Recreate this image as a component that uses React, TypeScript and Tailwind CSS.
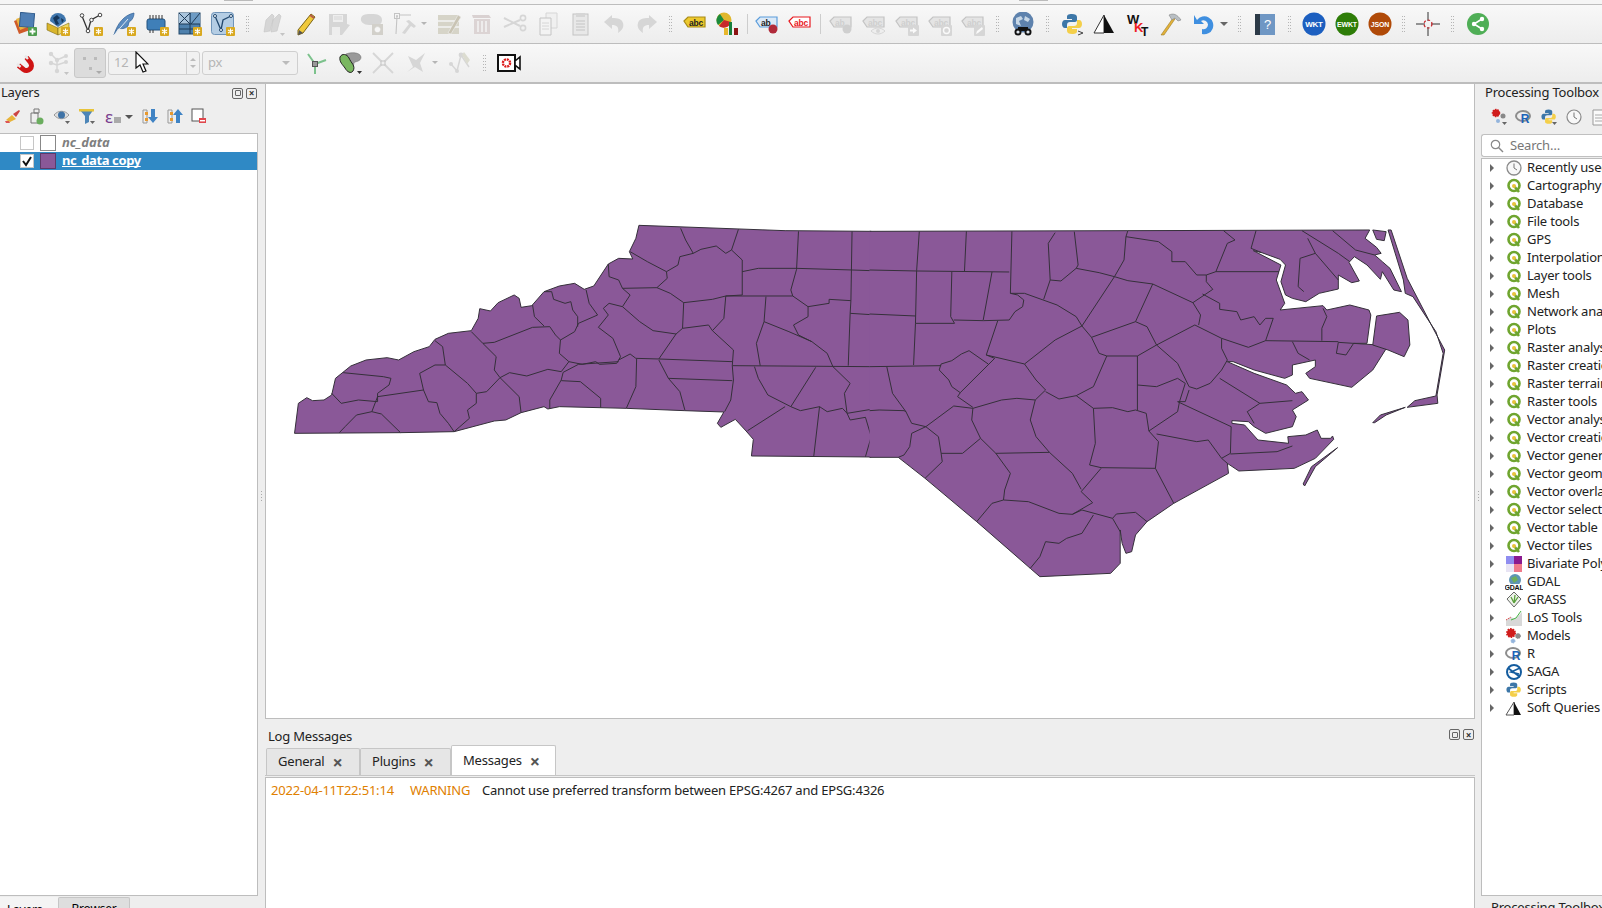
import React from "react";

const FONT = "font-['Noto_Sans','Open_Sans',sans-serif] tracking-[-0.2px]";

function S({ children, w = 24, h = 24 }: { children?: React.ReactNode; w?: number; h?: number }) {
  return (
    <svg width={w} height={h} viewBox={`0 0 ${w} ${h}`} className="block shrink-0">
      {children}
    </svg>
  );
}

// yellow "new layer" badge
const Star = ({ x = 14, y = 14 }: { x?: number; y?: number }) => (
  <g transform={`translate(${x} ${y})`}>
    <rect width="9" height="9" rx="1" fill="#d9a920" />
    <path d="M4.5 1.5v6M2 3l5 3M7 3L2 6" stroke="#fff" strokeWidth="1.1" />
  </g>
);

const Arrow = ({ x, y }: { x: number; y: number }) => <path d={`M${x} ${y}h5l-2.5 3z`} fill="#666" />;

const G = "#d6d6d6";
const GD = "#c4c4c4";

const Tag = ({ fill, stroke, color, label = "abc" }: { fill: string; stroke: string; color: string; label?: string }) => (
  <g>
    <path d="M1 9l4-4h17v10H5z" fill={fill} stroke={stroke} strokeWidth="1.2" />
    <text x="6" y="13.5" fontSize="8.5" fontWeight="700" fill={color} fontFamily="Liberation Sans">
      {label}
    </text>
  </g>
);

const Round = ({ fill, label, size = 8 }: { fill: string; label: string; size?: number }) => (
  <g>
    <circle cx="12" cy="12" r="11.5" fill={fill} />
    <text x="12" y="15" textAnchor="middle" fontSize={size} fontWeight="700" fill="#fff" fontFamily="Liberation Sans">
      {label}
    </text>
  </g>
);

const Python = () => (
  <g>
    <path d="M12 2c-4 0-5 1-5 3v2h5v1H5c-2 0-3 2-3 4s1 4 3 4h2v-3c0-2 1-3 3-3h5c1 0 2-1 2-2V5c0-2-2-3-5-3z" fill="#3d77a8" />
    <path d="M12 22c4 0 5-1 5-3v-2h-5v-1h7c2 0 3-2 3-4s-1-4-3-4h-2v3c0 2-1 3-3 3H9c-1 0-2 1-2 2v3c0 2 2 3 5 3z" fill="#f4cf4a" />
  </g>
);

const icons: Record<string, React.ReactNode> = {
  dsm: (
    <S>
      <path d="M1 9l10-4 6 13-11 4z" fill="#cf5a2a" />
      <path d="M3 7l11-4 3 11-10 4z" fill="#e9b43f" />
      <rect x="7" y="1" width="14" height="14" fill="#4f7fb5" stroke="#2f5b8c" transform="rotate(5 14 8)" />
      <rect x="15" y="15" width="9" height="9" rx="1" fill="#4f9d4f" />
      <path d="M19.5 16.5v6M16.5 19.5h6" stroke="#fff" strokeWidth="1.8" />
    </S>
  ),
  gpkg: (
    <S>
      <path d="M1 11l11 5v7L1 18z" fill="#d9b52c" stroke="#7e6a15" strokeWidth=".6" />
      <path d="M12 16l11-5v7l-11 5z" fill="#f0d75c" stroke="#7e6a15" strokeWidth=".6" />
      <path d="M4 9a8 8 0 0 1 16 0l-8 6z" fill="#3f76ad" />
      <path d="M7 6l4-3 3 3-3 2 2 4-3 1zM15 6l3 2-2 3z" fill="#16375c" />
      <Star x={15} y={15} />
    </S>
  ),
  newv: (
    <S>
      <path d="M3 4l6 15 3-11 9-5" fill="none" stroke="#333" strokeWidth="1.3" />
      <circle cx="3" cy="3.5" r="1.8" fill="#fff" stroke="#444" />
      <circle cx="12.5" cy="8" r="1.8" fill="#fff" stroke="#444" />
      <circle cx="21" cy="3" r="1.8" fill="#fff" stroke="#444" />
      <circle cx="9" cy="19" r="1.8" fill="#fff" stroke="#444" />
      <Star x={15} y={15} />
    </S>
  ),
  feather: (
    <S>
      <path d="M2 23C5 12 12 3 22 1c0 5-3 8-5 9l-1 4c-3 3-7 3-10 2z" fill="#5b8cc0" stroke="#2f5f93" strokeWidth=".7" />
      <path d="M2 23L16 7" stroke="#dfe9f3" strokeWidth="1" />
      <Star x={15} y={15} />
    </S>
  ),
  chip: (
    <S>
      <rect x="2" y="7" width="18" height="11" rx="2" fill="#3f7fb8" stroke="#22527f" />
      <path d="M5 3v4M8 3v4M11 3v4M14 3v4M17 3v4M5 18v3M8 18v3" stroke="#333" />
      <Star x={15} y={15} />
    </S>
  ),
  grid: (
    <S>
      <rect x="1" y="1" width="21" height="21" fill="#4f81ad" stroke="#23486b" />
      <rect x="13" y="1" width="9" height="11" fill="#6d9bc4" />
      <rect x="1" y="1" width="11" height="11" fill="#a9c4dc" />
      <path d="M1 1l11 11M12 1L1 12M22 1L13 12M1 12h21M12 1v21M1 17h21" stroke="#1e3a56" strokeWidth="1" />
      <Star x={15} y={15} />
    </S>
  ),
  vlayer: (
    <S>
      <rect x="0.5" y="0.5" width="22" height="22" rx="3" fill="#b4cde4" stroke="#6e93b8" />
      <path d="M4 4l6 14 2-10 8-4" fill="none" stroke="#22486e" strokeWidth="1.3" />
      <circle cx="4" cy="4" r="1.5" fill="#fff" stroke="#22486e" />
      <circle cx="20" cy="4" r="1.5" fill="#fff" stroke="#22486e" />
      <circle cx="10" cy="18" r="1.5" fill="#fff" stroke="#22486e" />
      <Star x={15} y={15} />
    </S>
  ),
  gpen: (
    <S>
      <path d="M3 20l2-12 6-6 2 2-4 15zM10 20l2-12 6-6 2 2-4 15z" fill={G} stroke={GD} strokeWidth=".6" />
      <path d="M19 21h5l-2.5 3z" fill={GD} />
    </S>
  ),
  pencil: (
    <S>
      <path d="M4 18L17 2l4 3L9 21l-5 2z" fill="#f0c93b" stroke="#7c6516" />
      <path d="M5 18l4 3-5 2z" fill="#555" />
      <path d="M16 3l4 3" stroke="#b65c4a" strokeWidth="2" />
    </S>
  ),
  save: (
    <S>
      <path d="M2 2h18v10l3 1-8 10H2z" fill={G} />
      <rect x="6" y="3" width="10" height="7" fill="#eee" />
      <path d="M7 5h8M7 7h8" stroke={G} />
      <rect x="5" y="15" width="8" height="8" fill="#eee" />
    </S>
  ),
  blob: (
    <S>
      <path d="M1 6c1-4 6-4 11-4s10 1 10 6c0 4-3 5-5 5H9C4 13 0 10 1 6z" fill={G} />
      <rect x="12" y="12" width="11" height="11" fill="#d2d0ca" />
      <circle cx="17.5" cy="17.5" r="2.6" fill="#f6f6f6" stroke="#f6f6f6" strokeDasharray="1 1" />
    </S>
  ),
  node: (
    <S>
      <path d="M4 4l-1 18M6 3h12" stroke={GD} strokeWidth="1.1" />
      <rect x="1.5" y="1.5" width="5" height="5" fill="none" stroke={GD} />
      <circle cx="4" cy="4" r="1" fill={GD} />
      <path d="M9 21l7-9-3-3 3-1 7 6-2 2-3-2-6 8z" fill={G} />
    </S>
  ),
  table: (
    <S>
      <rect x="1" y="3" width="21" height="19" fill="#d6d4c8" />
      <path d="M1 9h21M1 15h21" stroke="#f4f4f4" strokeWidth="1.5" />
      <path d="M11 21L21 3l3 2-10 17z" fill="#c9c4b4" stroke="#f0f0f0" strokeWidth=".6" />
    </S>
  ),
  trash: (
    <S>
      <path d="M2 3h17l2 3H3z" fill="#d9d1d1" />
      <path d="M4 7h16v15H4z" fill="#dcd4d4" />
      <path d="M8 9v11M12 9v11M16 9v11" stroke="#f3f3f3" strokeWidth="1.5" />
    </S>
  ),
  cut: (
    <S>
      <path d="M1 6l16 8M1 15l16-7" stroke={G} strokeWidth="2" />
      <circle cx="20" cy="6" r="2.6" fill="none" stroke={G} strokeWidth="1.6" />
      <circle cx="20" cy="16" r="2.6" fill="none" stroke={G} strokeWidth="1.6" />
    </S>
  ),
  copy: (
    <S>
      <path d="M10 1h11v15H10z" fill="#f0f0f0" stroke={G} />
      <path d="M4 6h11v17H4z" fill="#f3f3f3" stroke={GD} />
      <path d="M6 11h7M6 14h7M6 17h7" stroke={G} />
    </S>
  ),
  paste: (
    <S>
      <rect x="4" y="2" width="15" height="21" fill="#e8e8e8" stroke={GD} />
      <rect x="7" y="1" width="9" height="4" fill={G} />
      <path d="M7 9h9M7 12h9M7 15h9M7 18h9" stroke={GD} />
    </S>
  ),
  undo: (
    <S>
      <path d="M10 3L2 10l8 7v-4c5 0 7 2 6 8 5-3 6-7 5-10-1-4-5-5-11-5z" fill={G} />
    </S>
  ),
  redo: (
    <S>
      <path d="M14 3l8 7-8 7v-4c-5 0-7 2-6 8-5-3-6-7-5-10 1-4 5-5 11-5z" fill={G} />
    </S>
  ),
  abcY: (
    <S>
      <Tag fill="#edc92e" stroke="#a98c16" color="#222" />
    </S>
  ),
  pie: (
    <S>
      <circle cx="8" cy="8" r="7.5" fill="#e0b72c" />
      <path d="M8 8L2 13a7.5 7.5 0 0 1 2-11z" fill="#1a8a3c" />
      <path d="M8 8l7 2a7.5 7.5 0 0 1-12 4z" fill="#c7282a" />
      <rect x="8" y="16" width="4" height="7" fill="#e8b72c" />
      <rect x="13" y="10" width="3" height="13" fill="#17803c" />
      <rect x="18" y="16" width="4" height="7" fill="#8c1414" />
    </S>
  ),
  abcB: (
    <S>
      <Tag fill="#dbe9f7" stroke="#5c9ddb" color="#222" label="ab" />
      <circle cx="18" cy="17" r="4.5" fill="#b02a3a" />
    </S>
  ),
  abcR: (
    <S>
      <Tag fill="#fff" stroke="#e8181e" color="#e8181e" />
    </S>
  ),
  g1: (
    <S>
      <Tag fill="#e4e4e4" stroke={GD} color="#cfcfcf" label="ab" />
      <circle cx="18" cy="17" r="4.5" fill="#cfcfcf" />
    </S>
  ),
  g2: (
    <S>
      <Tag fill="#e4e4e4" stroke={GD} color="#cfcfcf" />
      <path d="M9 19c4-4 10-4 14 0-4 4-10 4-14 0z" fill="#eee" stroke={G} />
      <circle cx="16" cy="19" r="2" fill={G} />
    </S>
  ),
  g3: (
    <S>
      <Tag fill="#e4e4e4" stroke={GD} color="#cfcfcf" />
      <rect x="13" y="13" width="11" height="11" rx="1" fill={G} />
      <path d="M15 17.5h3v-2l4 3-4 3v-2h-3z" fill="#fafafa" />
    </S>
  ),
  g4: (
    <S>
      <Tag fill="#e4e4e4" stroke={GD} color="#cfcfcf" />
      <rect x="13" y="13" width="11" height="11" rx="1" fill={G} />
      <circle cx="18.5" cy="18.5" r="3" fill="none" stroke="#fafafa" strokeWidth="1.4" />
    </S>
  ),
  g5: (
    <S>
      <Tag fill="#e4e4e4" stroke={GD} color="#cfcfcf" />
      <rect x="13" y="13" width="11" height="11" rx="1" fill={G} />
      <path d="M15 22l1-3 5-4 1 2-5 4z" fill="#fafafa" />
    </S>
  ),
  globe: (
    <S>
      <circle cx="12" cy="10" r="10.5" fill="#5e82ad" />
      <path d="M5 6l5-2 2 3-4 2 2 5-5-2zM14 4l5 3-2 3-4-2z" fill="#c7d7e6" />
      <circle cx="7" cy="20" r="3.5" fill="#111" />
      <circle cx="17" cy="20" r="3.5" fill="#111" />
      <rect x="7" y="15" width="10" height="4" fill="#111" />
      <circle cx="7" cy="20" r="1.6" fill="#dfe6ee" />
      <circle cx="17" cy="20" r="1.6" fill="#dfe6ee" />
    </S>
  ),
  py: (
    <S>
      <Python />
      <path d="M18 19l5 2-5 2" fill="none" stroke="#444" />
    </S>
  ),
  tri: (
    <S>
      <path d="M11 3L1 21h10z" fill="#fff" stroke="#333" />
      <path d="M11 3l10 18H11z" fill="#111" />
    </S>
  ),
  wkt: (
    <S>
      <text x="1" y="12" fontSize="13" fontWeight="700" fill="#111" fontFamily="Liberation Sans">W</text>
      <text x="8" y="20" fontSize="13" fontWeight="700" fill="#ee1c25" fontFamily="Liberation Sans">K</text>
      <text x="15" y="23.5" fontSize="12" fontWeight="700" fill="#111" fontFamily="Liberation Sans">T</text>
    </S>
  ),
  hammer: (
    <S>
      <path d="M2 23L14 6l2 1L5 23z" fill="#e3b23a" stroke="#8d6c17" strokeWidth=".5" />
      <path d="M10 3c4-2 8-1 12 5l-3 1-3-3-3 2z" fill="#b9bfc4" stroke="#777" strokeWidth=".5" />
    </S>
  ),
  rot: (
    <S>
      <path d="M5 8a9 9 0 1 1 5 14v-5a4.5 4.5 0 1 0-1-8l3 3H2V3l3 5z" fill="#3f8fe0" />
    </S>
  ),
  help: (
    <S>
      <rect x="2" y="2" width="20" height="21" fill="#6f97c4" />
      <rect x="2" y="2" width="5" height="21" fill="#2c3a47" />
      <text x="14.5" y="17" textAnchor="middle" fontSize="13" fill="#fff" fontFamily="Liberation Sans">?</text>
    </S>
  ),
  rwkt: <S><Round fill="#1c5fc0" label="WKT" /></S>,
  rewkt: <S><Round fill="#2e7d08" label="EWKT" size={7} /></S>,
  rjson: <S><Round fill="#b04a08" label="JSON" size={7} /></S>,
  cross: (
    <S>
      <path d="M0 12h9M15 12h9M12 0v9M12 15v9" stroke="#333" />
      <circle cx="12" cy="12" r="4" fill="none" stroke="#c8242a" strokeWidth="1.2" strokeDasharray="2.5 2" />
    </S>
  ),
  share: (
    <S>
      <circle cx="12" cy="12" r="11" fill="#4fae56" />
      <path d="M16 7l-8 5 8 5" fill="none" stroke="#fff" strokeWidth="1.6" />
      <circle cx="16" cy="7" r="2.2" fill="#fff" />
      <circle cx="8" cy="12" r="2.2" fill="#fff" />
      <circle cx="16" cy="17" r="2.2" fill="#fff" />
    </S>
  ),
  magnet: (
    <S>
      <path d="M5.5 14.5l5 4a5 5 0 0 0 7-7l-4-5" fill="none" stroke="#cf1414" strokeWidth="5" />
      <path d="M4 13l3.6 3M12 4.6l3 3.4" stroke="#e9e9e9" strokeWidth="2.4" />
    </S>
  ),
  snapnet: (
    <S>
      <path d="M5 3l6 6v11M5 12l6 2M11 9l9-4M11 14l9-3" fill="none" stroke={G} strokeWidth="1.5" />
      <circle cx="5" cy="3" r="2.2" fill={G} /><circle cx="11" cy="9" r="2.2" fill={G} />
      <circle cx="5" cy="12" r="2.2" fill={G} /><circle cx="11" cy="20" r="2.2" fill={G} />
      <circle cx="20" cy="5" r="2" fill={G} /><circle cx="20" cy="11" r="2" fill={G} />
      <path d="M18 21h5l-2.5 3z" fill={GD} />
    </S>
  ),
  tr: (
    <S>
      <path d="M12 13L5 3M12 13l11-4M12 13v10" stroke="#7cc28c" strokeWidth="2" />
      <rect x="9.5" y="10.5" width="5" height="5" fill="#999" stroke="#555" />
    </S>
  ),
  topo: (
    <S>
      <path d="M8 3c5-2 14-2 15 3 0 5-6 4-7 6l-1 5-9-2z" fill="#9a9a9a" stroke="#666" strokeWidth=".5" />
      <path d="M2 6c2-4 7-3 9 1 2 5 7 8 4 13-2 3-6 1-8-3-2-3-6-6-5-11z" fill="#7ab760" stroke="#222" />
      <path d="M19 20h5l-2.5 3z" fill="#333" />
    </S>
  ),
  gx: (
    <S>
      <path d="M2 2l20 20M22 2L2 22" stroke={G} strokeWidth="1.8" />
      <rect x="10" y="10" width="4" height="4" fill="#eee" stroke={GD} />
    </S>
  ),
  gx2: (
    <S>
      <path d="M3 21l6-5-5-11 8 4 9-7-5 10 3 9-8-5z" fill={G} />
    </S>
  ),
  gn: (
    <S>
      <path d="M3 13l6 7 4-16 8 12" fill="none" stroke={G} strokeWidth="1.5" />
      <circle cx="3" cy="13" r="2" fill={G} /><circle cx="9" cy="20" r="2" fill={G} /><circle cx="13" cy="4" r="2.4" fill={G} />
      <path d="M16 1l6 8-3 4-5-9z" fill="#dcdcd0" />
    </S>
  ),
  video: (
    <S>
      <rect x="1" y="4" width="17" height="16" fill="#fff" stroke="#111" strokeWidth="2" />
      <path d="M18 10l5-4v12l-5-4z" fill="#fff" stroke="#111" strokeWidth="1.6" />
      <circle cx="9.5" cy="12" r="3.6" fill="none" stroke="#dd1b1b" strokeWidth="2.4" strokeDasharray="2 .8" />
    </S>
  ),
};

function Btn({ name, wide }: { name: string; wide?: boolean }) {
  return (
    <div className={`relative flex h-full shrink-0 items-center ${wide ? "w-[44px] pl-[5px]" : "w-[33px] justify-center"}`}>
      {icons[name]}
      {wide && <span className="absolute right-[5px] top-[17px] h-0 w-0 border-x-[3px] border-t-[3px] border-x-transparent border-t-[#b5b5b5]" />}
    </div>
  );
}

function Handle({ w = "w-[17px]" }: { w?: string }) {
  return (
    <div className={`flex h-full shrink-0 items-center justify-center ${w}`}>
      <div className="grid grid-cols-2 gap-x-[1px] gap-y-[2px]">
        {Array.from({ length: 12 }).map((_, i) => (
          <span key={i} className="h-[1px] w-[1px] bg-[#b5b5b5]" />
        ))}
      </div>
    </div>
  );
}

const Sep = ({ w = "w-[6px]" }: { w?: string }) => (
  <div className={`flex h-full shrink-0 items-center justify-center ${w}`}>
    <div className="h-[20px] w-[1px] bg-[#cdcdcd]" />
  </div>
);

function FirstToolbar() {
  return (
    <div className="flex h-[39px] items-center border-b-[1px] border-[#bdbdbd] bg-gradient-to-b from-[#f8f8f8] to-[#ededed]">
      <div className="w-[8px]" />
      {["dsm", "gpkg", "newv", "feather", "chip", "grid", "vlayer"].map((n) => <Btn key={n} name={n} />)}
      <Handle />
      <Btn name="gpen" /><Btn name="pencil" /><Btn name="save" /><Btn name="blob" />
      <Btn name="node" wide />
      <Btn name="table" /><Btn name="trash" /><Btn name="cut" /><Btn name="copy" /><Btn name="paste" /><Btn name="undo" /><Btn name="redo" />
      <Handle w="w-[15px]" />
      <Btn name="abcY" /><Btn name="pie" />
      <Sep />
      <Btn name="abcB" /><Btn name="abcR" />
      <Sep w="w-[8px]" />
      <Btn name="g1" /><Btn name="g2" /><Btn name="g3" /><Btn name="g4" /><Btn name="g5" />
      <Handle />
      <Btn name="globe" />
      <Handle w="w-[16px]" />
      <Btn name="py" /><Btn name="tri" /><Btn name="wkt" /><Btn name="hammer" />
      <div className="relative flex h-full w-[44px] shrink-0 items-center pl-[5px]">
        {icons.rot}
        <span className="absolute right-[3px] top-[17px] h-0 w-0 border-x-[4px] border-t-[4px] border-x-transparent border-t-[#666]" />
      </div>
      <Handle />
      <Btn name="help" />
      <Handle w="w-[16px]" />
      <Btn name="rwkt" /><Btn name="rewkt" /><Btn name="rjson" />
      <Handle w="w-[15px]" />
      <Btn name="cross" />
      <Handle />
      <Btn name="share" />
    </div>
  );
}

function SecondToolbar() {
  return (
    <div className="flex h-[40px] items-center border-b-[2px] border-[#bdbdbd] bg-gradient-to-b from-[#f8f8f8] to-[#ededed]">
      <div className="w-[8px]" />
      <Btn name="magnet" />
      <Btn name="snapnet" />
      <div className="relative h-[30px] w-[32px] shrink-0 rounded-[3px] border border-[#c8c8c8] bg-[#dcdcdc]">
        <span className="absolute left-[8px] top-[8px] h-[3px] w-[3px] bg-[#bbb]" />
        <span className="absolute left-[19px] top-[8px] h-[3px] w-[3px] bg-[#bbb]" />
        <span className="absolute left-[14px] top-[18px] h-[3px] w-[3px] bg-[#bbb]" />
        <span className="absolute bottom-[3px] right-[3px] h-0 w-0 border-x-[3px] border-t-[3px] border-x-transparent border-t-[#aaa]" />
      </div>
      <div className="ml-[2px] flex h-[24px] w-[92px] shrink-0 items-center justify-between rounded-[3px] border border-[#cfcfcf] bg-[#f1f1f1] pl-[5px] text-[13px] text-[#b5b5b5]">
        12
        <span className="flex h-full w-[13px] flex-col items-center justify-center gap-[4px] border-l border-[#cfcfcf]">
          <span className="h-0 w-0 border-x-[3px] border-b-[3px] border-x-transparent border-b-[#bbb]" />
          <span className="h-0 w-0 border-x-[3px] border-t-[3px] border-x-transparent border-t-[#bbb]" />
        </span>
      </div>
      <div className="ml-[2px] flex h-[24px] w-[96px] shrink-0 items-center justify-between rounded-[3px] border border-[#cfcfcf] bg-[#f1f1f1] px-[5px] text-[13px] text-[#b5b5b5]">
        px
        <span className="mr-[2px] h-0 w-0 border-x-[4px] border-t-[4px] border-x-transparent border-t-[#bbb]" />
      </div>
      <Btn name="tr" />
      <div className="w-[2px]" />
      <Btn name="topo" />
      <Btn name="gx" />
      <Btn name="gx2" wide />
      <Btn name="gn" />
      <Handle w="w-[16px]" />
      <Btn name="video" />
    </div>
  );
}

function DockButtons() {
  return (
    <div className="flex items-center gap-[3px]">
      <span className="flex h-[11px] w-[11px] items-center justify-center rounded-[2px] border border-[#666]">
        <span className="h-[6px] w-[6px] rounded-[1px] border border-[#666]" />
      </span>
      <span className="flex h-[11px] w-[11px] items-center justify-center rounded-[2px] border border-[#666] text-[10px] leading-none font-bold text-[#333]">
        ×
      </span>
    </div>
  );
}

const miniIcons: React.ReactNode[] = [
  <S key="b" w={18} h={18}><path d="M3 13l6-5 4 4-6 3z" fill="#e8b43a" /><path d="M10 7l6-4 1 1-4 6z" fill="#c44" /><path d="M2 14l4 0 1 2-4 0z" fill="#d55" /></S>,
  <S key="c" w={18} h={18}><path d="M4 6h7v10H4zM7 2h5v4H7z" fill="#eee" stroke="#777" /><circle cx="13" cy="14" r="3.5" fill="#6aad5e" /></S>,
  <S key="e" w={18} h={18}><path d="M1 8c4-5 11-5 15 0-4 5-11 5-15 0z" fill="#ddd" stroke="#999" /><circle cx="8.5" cy="8" r="3.5" fill="#3f73a6" /><Arrow x={12} y={14} /></S>,
  <S key="f" w={18} h={18}><path d="M1 2h15l-5 7v6l-4 2V9z" fill="#4d86b8" /><rect x="1" y="2" width="15" height="2.5" fill="#e8c43a" /><Arrow x={12} y={14} /></S>,
];

function LayersPanel() {
  return (
    <div className="flex w-[258px] shrink-0 flex-col">
      <div className="flex h-[18px] items-center justify-between pr-[1px] pl-[1px] text-[13px] text-[#222]">
        Layers
        <DockButtons />
      </div>
      <div className="flex h-[31px] items-center pb-[3px]">
        <div className="flex w-[23px] justify-center">{miniIcons[0]}</div>
        <div className="flex w-[26px] justify-center">{miniIcons[1]}</div>
        <div className="flex w-[25px] justify-center">{miniIcons[2]}</div>
        <div className="flex w-[26px] justify-center">{miniIcons[3]}</div>
        <div className="relative flex w-[37px] items-center pl-[5px]">
          <span className="text-[17px] leading-none text-[#7a3f8f]">ε</span>
          <span className="ml-[1px] mt-[8px] h-[6px] w-[7px] bg-[#aaa]" />
          <span className="absolute right-[4px] top-[7px] h-0 w-0 border-x-[4px] border-t-[4px] border-x-transparent border-t-[#555]" />
        </div>
        <div className="flex w-[25px] justify-center">
          <S w={18} h={18}><path d="M2 3h4v13H2z" fill="none" stroke="#999" /><rect x="4" y="5" width="3" height="3" fill="#e8992e" /><rect x="4" y="11" width="3" height="3" fill="#e8992e" /><path d="M10 2h4v8h3l-5 6-5-6h3z" fill="#3f83c4" /></S>
        </div>
        <div className="flex w-[25px] justify-center">
          <S w={18} h={18}><path d="M2 3h4v13H2z" fill="none" stroke="#999" /><rect x="4" y="5" width="3" height="3" fill="#e8992e" /><rect x="4" y="11" width="3" height="3" fill="#e8992e" /><path d="M10 16h4V8h3l-5-6-5 6h3z" fill="#3f83c4" /></S>
        </div>
        <div className="flex w-[24px] justify-center">
          <S w={18} h={18}><rect x="2" y="2" width="11" height="12" fill="#fff" stroke="#555" /><rect x="9" y="11" width="7" height="5" fill="#e0474c" /><rect x="10" y="13" width="5" height="1.4" fill="#fff" /></S>
        </div>
      </div>
      <div className="flex min-h-0 flex-1 flex-col border-y border-r border-[#bdbdbd] bg-white">
        <div className="flex h-[18px] items-center">
          <span className="ml-[20px] h-[14px] w-[14px] border border-[#c6c6c6] bg-white" />
          <span className="ml-[6px] h-[16px] w-[16px] border border-[#888] bg-white" />
          <span className="ml-[6px] text-[13px] font-bold italic tracking-normal text-[#7f7f7f]">nc_data</span>
        </div>
        <div className="flex h-[18px] items-center bg-[#2f89c5]">
          <span className="ml-[20px] flex h-[14px] w-[14px] items-center justify-center border border-[#c6c6c6] bg-white">
            <S w={12} h={12}><path d="M2 6l3 4 5-8" fill="none" stroke="#111" strokeWidth="2" /></S>
          </span>
          <span className="ml-[6px] h-[16px] w-[16px] border border-[#5d3a69] bg-[#8a5898]" />
          <span className="ml-[6px] text-[13px] font-bold tracking-[-0.4px] text-white underline [text-decoration-skip-ink:none]">nc_data copy</span>
        </div>
      </div>
      <div className="flex h-[12px] items-start pt-[1px] text-[12px]">
        <div className="h-[11px] w-[58px] bg-[#f4f4f4] pl-[7px] leading-[26px]">
          <div className="h-[11px] overflow-hidden">Layers</div>
        </div>
        <div className="h-[11px] w-[72px] rounded-t-[2px] border-x border-t border-[#c6c6c6] bg-[#dedede] text-center leading-[22px]">
          <div className="h-[10px] overflow-hidden">Browser</div>
        </div>
      </div>
    </div>
  );
}

// Traced from the reference; coords are in zoomed-crop units, hence the two transforms below.
const WEST_OUTLINE =
  "M1545 64L1320 62L938 46L930 85L913 125L922 147L885 145L858 162L820 228L795 238L770 220L730 228L690 245L658 287L630 292L625 265L612 255L570 278L550 303L522 296L518 325L500 362L440 370L405 388L390 410L350 425L310 450L280 443L225 450L185 468L145 505L135 555L115 570L85 572L70 563L48 580L38 670L315 668L455 665L560 633L590 630L630 608L690 590L700 597L730 590L905 595L1058 602L1160 606L1143 640L1152 652L1190 628L1218 663L1237 688L1232 738L1545 741";

const WEST_LINES = [
  "M1047 55L1060 90L1080 130L1100 118L1140 108L1165 130L1180 120L1198 58",
  "M1180 120L1208 150L1208 255L1165 258L1130 268L1055 278L1020 250L985 233L895 235",
  "M915 125L960 155L1010 185L1040 165L1045 140L1080 130",
  "M1010 185L1012 205L985 233",
  "M858 162L860 200L885 210L895 235L915 255L895 290L860 280L845 295L858 315L832 352L870 385L890 440L880 460L835 463L825 455L790 463L755 455L730 430L733 390",
  "M895 290L940 335L975 362L1035 372L990 447",
  "M1055 278L1052 355L1120 345L1130 362L1160 325L1165 258",
  "M1052 355L1035 372",
  "M1130 362L1185 420L1182 467L1185 510L1178 570L1162 605",
  "M990 447L1182 455",
  "M990 450L1015 505L1045 545L1058 600",
  "M1015 505L1182 512",
  "M990 447L930 445L915 432L885 450",
  "M932 447L930 530L905 595",
  "M885 455L780 463L740 487L735 510L705 570L705 595",
  "M735 512L785 515L838 565L838 592",
  "M755 455L735 485L700 478L645 498L600 488L575 503L625 560L630 608",
  "M575 503L560 480L565 440L530 400L500 365",
  "M530 400L560 397L660 352L705 350L720 375L733 390L770 365L780 340L830 315L808 280L800 240",
  "M690 245L710 245L715 268L745 280L760 275L765 300L778 320L778 350",
  "M660 285L665 320L690 348",
  "M405 392L425 410L432 465L405 465L365 490L375 540L255 560L240 605L200 615L170 650L155 668",
  "M240 605L265 612L315 668",
  "M432 465L490 520L513 550",
  "M575 503L540 545L513 550L513 580L490 600L495 625L470 650L455 665",
  "M375 540L388 575L410 578L418 610L440 640L455 665",
  "M165 488L270 500L290 505L285 525L255 550L255 575L205 570L160 580L135 550",
  "M1182 467L1545 470",
  "M1240 470L1250 505L1275 555L1335 590L1400 472",
  "M1445 470L1490 520L1475 550L1482 610L1490 630L1530 622L1545 680L1530 740",
  "M1482 610L1545 598",
  "M1320 590L1222 662",
  "M1335 590L1360 602L1410 590L1395 738",
  "M1410 590L1430 605L1470 595L1482 610",
  "M1255 467L1245 400L1265 335L1330 365L1390 395L1430 430L1445 470",
  "M1270 260L1265 335",
  "M1165 258L1340 258L1380 290L1380 320L1342 345L1355 375L1390 395",
  "M1380 290L1435 280L1435 268L1492 272L1495 64",
  "M1492 272L1490 310L1485 467",
  "M1355 64L1350 178L1335 240L1340 258",
  "M1208 185L1250 175L1350 175L1495 180L1545 182",
  "M1490 310L1545 314",
];

const EAST_OUTLINE =
  "M25 64L700 62L1332 60L1320 85L1350 112L1362 130L1345 135L1365 155L1385 175L1415 245L1395 240L1365 185L1360 208L1325 165L1292 140L1278 157L1305 213L1285 218L1250 195L1250 237L1200 250L1165 275L1130 265L1112 255L1100 215L1112 165L1098 148L1050 128L1028 122L1100 165L1088 210L1110 280L1098 300L1210 287L1220 300L1280 285L1330 300L1335 315L1325 400L1290 400L1270 435L1245 430L1250 397L1380 407L1340 480L1285 532L1175 505L1165 490L1190 470L1190 450L1130 465L1130 495L1110 505L1030 480L975 455L960 455L1030 490L1115 525L1138 550L1155 545L1172 570L1130 600L1140 620L1130 650L1060 670L1030 650L1015 635L972 632L972 640L1005 645L1040 690L1120 700L1118 680L1165 675L1195 660L1205 685L1230 685L1235 678L1238 688L1190 745L1135 775L990 783L960 760L963 790L820 880L750 935L720 975L710 1025L695 1030L685 1000L680 960L680 1060L655 1090L470 1100L445 1075L305 935L170 805L100 742L25 742";

const EAST_PIECES = [
  "M1350 318L1410 307L1432 330L1437 405L1422 440L1380 420L1340 405Z",
  "M1380 60L1388 60L1430 205L1500 360L1528 420L1508 555L1510 580L1430 592L1450 572L1505 558L1524 430L1505 365L1445 260L1425 250L1420 210Z",
  "M1340 60L1375 65L1370 92L1350 88Z",
  "M1340 638L1360 615L1425 592L1375 615L1345 638Z",
  "M1158 822L1180 770L1248 713L1190 770L1162 828Z",
];

const EAST_LINES = [
  "M155 64L148 182L145 340L140 465",
  "M278 64L273 185",
  "M397 64L393 250",
  "M25 180L148 183L390 186",
  "M240 185L237 320L247 340",
  "M345 186L322 330",
  "M145 340L247 340",
  "M245 330L322 332L390 330L405 305L425 290L428 270L412 255L393 250",
  "M25 312L145 318",
  "M360 332L330 435L430 462",
  "M393 250L430 250L515 285L565 320L580 348L510 390L430 462",
  "M330 435L352 445L262 548L255 560L295 592",
  "M430 462L460 510L485 540",
  "M25 470L212 467",
  "M335 462L285 422L265 432L240 452L212 462L207 480L232 510L240 530L262 548",
  "M70 470L85 550L120 605L135 640L172 650",
  "M25 602L50 600L115 602L120 605",
  "M172 650L245 588L295 595L370 570L410 565L458 570L485 540",
  "M295 595L292 630L315 685L355 730L495 727",
  "M315 685L268 730L212 730L205 680L172 650L135 670L130 710L115 735L100 742",
  "M212 730L215 755L170 805",
  "M355 730L393 790L378 840L375 870L345 880L305 935",
  "M375 870L440 875L520 910L555 913L608 878L578 845L630 775",
  "M458 570L445 630L460 680L495 727L555 790L578 838",
  "M485 545L520 567L565 557L610 530L645 438L725 438L775 405",
  "M565 557L610 595L660 593L700 605L720 600L748 610L755 663L780 695L772 775L820 880",
  "M610 595L615 700L600 765L630 773L772 775",
  "M725 438L725 600",
  "M725 525L775 530L830 505L850 520L835 575L830 605L755 663",
  "M775 405L830 460L860 530L880 537L915 520L945 480L960 450L945 415L945 385",
  "M860 540L850 575L830 575L970 650L968 730L945 745",
  "M775 672L880 695L910 690L945 745L960 760",
  "M940 505L1045 580L1130 572",
  "M1045 580L1012 605L1030 640",
  "M968 732L1090 725L1130 708",
  "M555 913L580 900L660 925L670 912L720 907L750 935",
  "M610 915L580 970L540 985L520 1000L485 995L470 1040L445 1075",
  "M660 925L680 965",
  "M580 348L605 382L720 335L750 350L775 405L875 345L945 385L1015 412L1060 392L1250 395",
  "M605 382L625 430L645 438",
  "M580 348L665 200L690 150L695 80L700 62",
  "M720 335L765 222L870 278L890 315L885 345",
  "M665 200L700 212L765 222",
  "M480 268L497 210L525 213L565 175L625 188L665 200",
  "M497 210L492 100L510 68",
  "M560 65L570 165L565 175",
  "M695 80L780 95L815 125L815 155L850 155L880 195L905 195L905 215L922 238L870 278",
  "M950 62L980 90L960 100L930 185L905 195",
  "M930 185L1095 185",
  "M895 252L940 280L940 298L985 305L995 330L1030 320L1045 345L1060 325L1080 325L1060 392",
  "M1035 62L1022 115L1050 128",
  "M1170 85L1190 130L1150 145L1145 230L1160 245",
  "M1155 62L1250 130L1280 155",
  "M1235 62L1295 120L1345 135",
  "M1190 130L1250 210",
  "M1207 392L1207 355L1220 320L1210 295",
  "M1130 395L1145 430L1175 450",
];

function StateMap() {
  const land = "#8a5898";
  const line = "#35303a";
  return (
    <svg viewBox="266 84 1208 634" className="block h-full w-full" preserveAspectRatio="none">
      <g transform="translate(280 210) scale(0.38265 0.33333)" strokeLinejoin="round">
        <path d={WEST_OUTLINE} fill={land} stroke={line} strokeWidth="1" vectorEffect="non-scaling-stroke" />
        {WEST_LINES.map((d) => (
          <path key={d} d={d} fill="none" stroke={line} strokeWidth="1" vectorEffect="non-scaling-stroke" />
        ))}
      </g>
      <g transform="translate(860 210) scale(0.38265 0.33333)" strokeLinejoin="round">
        <path d={EAST_OUTLINE} fill={land} stroke={line} strokeWidth="1" vectorEffect="non-scaling-stroke" />
        {EAST_PIECES.map((d) => (
          <path key={d} d={d} fill={land} stroke={line} strokeWidth="1" vectorEffect="non-scaling-stroke" />
        ))}
        {EAST_LINES.map((d) => (
          <path key={d} d={d} fill="none" stroke={line} strokeWidth="1" vectorEffect="non-scaling-stroke" />
        ))}
      </g>
    </svg>
  );
}

function Tab({ label, active, w }: { label: string; active?: boolean; w: string }) {
  return (
    <div
      className={`flex items-center gap-[8px] rounded-t-[2px] border-x border-t border-[#c6c6c6] pl-[11px] text-[13px] text-[#222] ${w} ${
        active ? "h-[30px] bg-white" : "h-[27px] bg-[#e6e6e6]"
      }`}
    >
      {label}
      <span className="text-[18px] font-bold leading-none text-[#555]">×</span>
    </div>
  );
}

function LogPanel() {
  return (
    <div className="flex h-[189px] shrink-0 flex-col">
      <div className="flex h-[26px] items-end justify-between pr-[1px] pl-[3px] text-[13px] text-[#222]">
        <span className="leading-[18px]">Log Messages</span>
        <span className="mb-[5px]"><DockButtons /></span>
      </div>
      <div className="flex items-end border-b border-[#c6c6c6] pl-[1px]">
        <Tab label="General" w="w-[94px]" />
        <Tab label="Plugins" w="w-[91px]" />
        <Tab label="Messages" active w="w-[105px]" />
      </div>
      <div className="mt-[1px] flex-1 border-x border-t border-[#bdbdbd] bg-white pl-[5px] pt-[3px] text-[13px] leading-[18px]">
        <div className="flex">
          <span className="w-[139px] text-[#e08000]">2022-04-11T22:51:14</span>
          <span className="w-[72px] text-[#e08000]">WARNING</span>
          <span className="text-[#222]">Cannot use preferred transform between EPSG:4267 and EPSG:4326</span>
        </div>
      </div>
    </div>
  );
}

const Q = () => (
  <S w={18} h={18}>
    <circle cx="9" cy="8.5" r="5.5" fill="none" stroke="#6fa52f" strokeWidth="2.6" />
    <path d="M9 9l5 6" stroke="#6fa52f" strokeWidth="2.6" />
    <circle cx="9" cy="9" r="2" fill="#e8c33c" />
  </S>
);

const rows: { label: string; icon: React.ReactNode }[] = [
  { label: "Recently used", icon: <S w={18} h={18}><circle cx="9" cy="9" r="7" fill="#f8f8f8" stroke="#8a8a8a" strokeWidth="1.3" /><path d="M9 4.5V9l3 2" fill="none" stroke="#777" /></S> },
  ...[
    "Cartography", "Database", "File tools", "GPS", "Interpolation", "Layer tools", "Mesh", "Network analysis", "Plots",
    "Raster analysis", "Raster creation", "Raster terrain analysis", "Raster tools", "Vector analysis", "Vector creation",
    "Vector general", "Vector geometry", "Vector overlay", "Vector selection", "Vector table", "Vector tiles",
  ].map((label) => ({ label, icon: <Q /> })),
  { label: "Bivariate Polygon", icon: <S w={18} h={18}><rect x="1" y="1" width="16" height="16" fill="#c779b0" /><rect x="1" y="1" width="8" height="8" fill="#8f8df0" /><rect x="9" y="1" width="8" height="8" fill="#8a1a8f" /><rect x="1" y="9" width="8" height="8" fill="#e8e4f4" /><rect x="9" y="9" width="8" height="8" fill="#f07a8a" /></S> },
  { label: "GDAL", icon: <S w={18} h={18}><circle cx="10" cy="7" r="6" fill="#5f95b5" /><path d="M6 5l5-2 2 4-4 3z" fill="#6fae5b" /><rect x="1" y="11" width="16" height="6" fill="#fff" /><text x="9" y="17" textAnchor="middle" fontSize="7" fontWeight="700" fill="#111" fontFamily="Liberation Sans">GDAL</text></S> },
  { label: "GRASS", icon: <S w={18} h={18}><path d="M9 1l7 7-7 8-7-8z" fill="#eef3ea" stroke="#666" /><path d="M9 12L6 6M9 12l1-8M9 12l4-6" stroke="#5aa03c" strokeWidth="1.3" /></S> },
  { label: "LoS Tools", icon: <S w={18} h={18}><path d="M1 11l5-3 4 2 7-7v14H1z" fill="#d8d8d8" /><path d="M1 11l5-3" stroke="#e04040" strokeDasharray="1.5 1" /><path d="M6 11l5-2 5-7" fill="none" stroke="#45b545" /></S> },
  { label: "Models", icon: <S w={18} h={18}><circle cx="6" cy="6" r="4" fill="#d01c1c" stroke="#d01c1c" strokeWidth="2" strokeDasharray="1.5 1" /><circle cx="13" cy="9" r="2.5" fill="#8b8b8b" stroke="#8b8b8b" strokeDasharray="1 1" /><circle cx="8" cy="14" r="2" fill="#93b4dc" stroke="#93b4dc" strokeDasharray="1 1" /></S> },
  { label: "R", icon: <S w={18} h={18}><ellipse cx="8" cy="8" rx="7" ry="5" fill="none" stroke="#8d8d8d" strokeWidth="2" /><text x="11" y="15" textAnchor="middle" fontSize="12" fontWeight="700" fill="#1d63b8" fontFamily="Liberation Sans">R</text></S> },
  { label: "SAGA", icon: <S w={18} h={18}><circle cx="9" cy="9" r="7" fill="none" stroke="#145c9e" strokeWidth="2" /><path d="M3 5l12 9M15 5L6 9l8 2" fill="none" stroke="#145c9e" strokeWidth="1.6" /></S> },
  { label: "Scripts", icon: <S w={18} h={18}><g transform="scale(.72)"><Python /></g></S> },
  { label: "Soft Queries", icon: <S w={18} h={18}><path d="M9 3L1 16h8z" fill="#fff" stroke="#555" /><path d="M9 3l7 13H9z" fill="#111" /></S> },
];

function ProcessingPanel() {
  return (
    <div className="flex min-w-0 flex-1 flex-col overflow-hidden">
      <div className="flex h-[18px] shrink-0 items-center whitespace-nowrap pl-[4px] text-[13px] text-[#222]">Processing Toolbox</div>
      <div className="flex h-[32px] shrink-0 items-center pb-[3px] pl-[5px]">
        <div className="flex w-[25px] shrink-0 justify-center">
          <S w={18} h={18}><circle cx="6" cy="5" r="3.5" fill="#d01c1c" stroke="#d01c1c" strokeWidth="1.5" strokeDasharray="1.5 1" /><circle cx="13" cy="8" r="2.5" fill="#888" /><circle cx="8" cy="13" r="2" fill="#93b4dc" /><Arrow x={12} y={14} /></S>
        </div>
        <div className="flex w-[25px] shrink-0 justify-center">
          <S w={18} h={18}><ellipse cx="8" cy="8" rx="7" ry="5" fill="none" stroke="#8d8d8d" strokeWidth="2" /><text x="10" y="15" textAnchor="middle" fontSize="12" fontWeight="700" fill="#1d63b8" fontFamily="Liberation Sans">R</text></S>
        </div>
        <div className="flex w-[25px] shrink-0 justify-center">
          <S w={18} h={18}><g transform="scale(.72)"><Python /></g><Arrow x={12} y={14} /></S>
        </div>
        <div className="flex w-[25px] shrink-0 justify-center">
          <S w={18} h={18}><circle cx="9" cy="9" r="7" fill="#f8f8f8" stroke="#8a8a8a" strokeWidth="1.2" /><path d="M9 4.5V9l3 2" fill="none" stroke="#777" /></S>
        </div>
        <div className="flex w-[25px] shrink-0 justify-center">
          <S w={18} h={18}><path d="M3 2h9l3 3v12H3z" fill="#fafafa" stroke="#999" /><path d="M5 7h8M5 10h8M5 13h8" stroke="#aaa" /></S>
        </div>
      </div>
      <div className="flex h-[23px] shrink-0 items-center rounded-l-[3px] border-y border-l border-[#c0c0c0] bg-white pl-[8px] text-[13px] text-[#777]">
        <svg width="14" height="14" viewBox="0 0 14 14" className="shrink-0">
          <circle cx="5.5" cy="5.5" r="4.2" fill="none" stroke="#888" strokeWidth="1.2" />
          <path d="M8.5 8.5L13 13" stroke="#888" strokeWidth="1.4" />
        </svg>
        <span className="ml-[6px]">Search…</span>
      </div>
      <div className="mt-[1px] min-h-0 flex-1 border-y border-l border-[#bdbdbd] bg-white">
        {rows.map((r) => (
          <div key={r.label} className="flex h-[18px] items-center whitespace-nowrap text-[13px] text-[#222]">
            <span className="ml-[8px] mr-[11px] h-0 w-0 shrink-0 border-y-[4px] border-l-[4px] border-y-transparent border-l-[#666]" />
            <span className="mr-[4px] flex w-[18px] shrink-0 justify-center">{r.icon}</span>
            {r.label}
          </div>
        ))}
      </div>
      <div className="h-[12px] shrink-0 overflow-hidden whitespace-nowrap pl-[10px] text-[13px] leading-[22px] text-[#222]">Processing Toolbox</div>
    </div>
  );
}

export default function App() {
  return (
    <div className={`relative flex h-[908px] w-[1602px] flex-col overflow-hidden bg-[#eeeeee] ${FONT}`}>
      <div className="flex h-[5px] shrink-0 items-start border-b-[1px] border-[#bdbdbd] bg-[#f5f5f5]">
        <span className="ml-[224px] h-[1px] w-[29px] bg-[#bbb]" />
        <span className="ml-[766px] h-[1px] w-[29px] bg-[#bbb]" />
      </div>
      <FirstToolbar />
      <SecondToolbar />
      {/* mouse pointer */}
      <svg width="14" height="22" viewBox="0 0 14 22" className="absolute left-[135px] top-[51px]">
        <path d="M1 1v16l4-3 3 7 3-1-3-7h5z" fill="#fff" stroke="#111" strokeWidth="1.2" />
      </svg>
      <div className="flex min-h-0 flex-1">
        <LayersPanel />
        <div className="flex w-[7px] shrink-0 items-center justify-center">
          <div className="flex flex-col gap-[2px]">
            {[0, 1, 2, 3].map((i) => <span key={i} className="h-[1px] w-[1px] bg-[#aaa]" />)}
          </div>
        </div>
        <div className="flex w-[1210px] shrink-0 flex-col">
          <div className="min-h-0 flex-1 border border-t-0 border-[#bdbdbd] bg-white">
            <StateMap />
          </div>
          <LogPanel />
        </div>
        <div className="flex w-[6px] shrink-0 items-center justify-center">
          <div className="flex flex-col gap-[2px]">
            {[0, 1, 2, 3].map((i) => <span key={i} className="h-[1px] w-[1px] bg-[#aaa]" />)}
          </div>
        </div>
        <ProcessingPanel />
      </div>
    </div>
  );
}
